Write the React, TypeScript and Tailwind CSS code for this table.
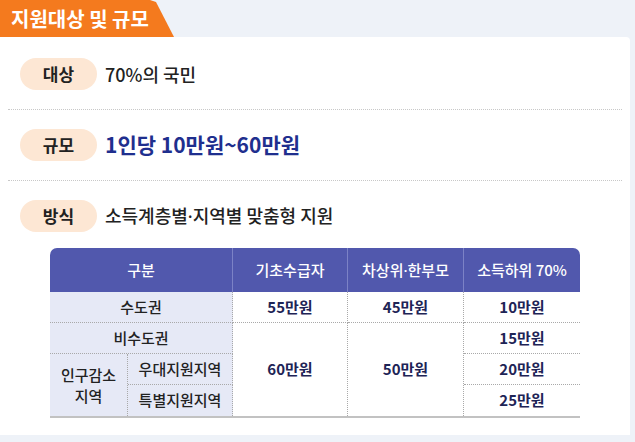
import React from "react";

const font = { fontFamily: '"Noto Sans CJK KR", "Noto Sans", sans-serif' };
const dotFont = { fontFamily: '"Noto Sans", "Liberation Sans", sans-serif' };

function Dot() {
  return <span style={dotFont}>·</span>;
}

function Badge({ children }: { children: React.ReactNode }) {
  return (
    <div className="flex h-[32px] w-[77px] shrink-0 items-center justify-center rounded-full bg-[#fde7d4] text-[17px] font-bold text-[#222]">
      {children}
    </div>
  );
}

const lab = "bg-[#e6e9f6] text-[15px] font-medium text-[#222] text-center";
const val = "bg-white text-[15px] font-bold text-[#1e2456] text-center";
const dotB = "border-b border-dotted border-[#a9a9a9]";
const dotR = "border-r border-dotted border-[#a9a9a9]";

export default function App() {
  return (
    <div className="h-[442px] w-[635px] overflow-hidden bg-[#eef2f8]" style={font}>
      <div className="h-[37px] w-[174px] bg-[#f47a1e] [clip-path:polygon(0_0,150px_0,156px_2px,174px_100%,0_100%)] flex items-center pl-[11px]">
        <span className="text-[20px] font-bold text-white">지원대상 및 규모</span>
      </div>
      <div className="mr-[5px] h-[398px] rounded-tr-[4px] bg-white pt-[2px]">
        <div className="mx-[8px] flex items-center gap-[8px] border-b border-dotted border-[#c8c8c8] pb-[19px] pl-[12px] pt-[19px]">
          <Badge>대상</Badge>
          <span className="text-[18px] font-medium text-[#222]">70%의 국민</span>
        </div>
        <div className="mx-[8px] flex items-center gap-[8px] border-b border-dotted border-[#c8c8c8] pb-[19px] pl-[12px] pt-[19px]">
          <Badge>규모</Badge>
          <span className="text-[21px] font-bold text-[#1f2f8e]">1인당 10만원~60만원</span>
        </div>
        <div className="mx-[8px] flex items-center gap-[8px] pl-[12px] pt-[19px]">
          <Badge>방식</Badge>
          <span className="text-[18px] font-medium text-[#222]">
            소득계층별<Dot />지역별 맞춤형 지원
          </span>
        </div>
        <div className="ml-[50px] mt-[16px] w-[530px] overflow-hidden rounded-t-[7px] border-b-2 border-[#c2c2c2]">
          <table className="w-[530px] table-fixed border-separate border-spacing-0">
            <colgroup>
              <col className="w-[78px]" />
              <col className="w-[105px]" />
              <col className="w-[115px]" />
              <col className="w-[116px]" />
              <col className="w-[116px]" />
            </colgroup>
            <thead>
              <tr className="h-[44px] bg-[#5158ad] text-[15px] font-medium text-white">
                <th colSpan={2} className="border-r border-[#7c82c6] font-medium">구분</th>
                <th className="border-r border-[#7c82c6] font-medium">기초수급자</th>
                <th className="border-r border-[#7c82c6] font-medium">
                  차상위<Dot />한부모
                </th>
                <th className="font-medium">소득하위 70%</th>
              </tr>
            </thead>
            <tbody>
              <tr className="h-[31px]">
                <td colSpan={2} className={`${lab} ${dotB} ${dotR}`}>수도권</td>
                <td className={`${val} ${dotB} ${dotR}`}>55만원</td>
                <td className={`${val} ${dotB} ${dotR}`}>45만원</td>
                <td className={`${val} ${dotB}`}>10만원</td>
              </tr>
              <tr className="h-[31px]">
                <td colSpan={2} className={`${lab} ${dotB} ${dotR}`}>비수도권</td>
                <td rowSpan={3} className={`${val} ${dotR}`}>60만원</td>
                <td rowSpan={3} className={`${val} ${dotR}`}>50만원</td>
                <td className={`${val} ${dotB}`}>15만원</td>
              </tr>
              <tr className="h-[31px]">
                <td rowSpan={2} className={`${lab} ${dotR} leading-[21px]`}>
                  인구감소
                  <br />
                  지역
                </td>
                <td className={`${lab} ${dotB} ${dotR}`}>우대지원지역</td>
                <td className={`${val} ${dotB}`}>20만원</td>
              </tr>
              <tr className="h-[31px]">
                <td className={`${lab} ${dotR}`}>특별지원지역</td>
                <td className={val}>25만원</td>
              </tr>
            </tbody>
          </table>
        </div>
      </div>
    </div>
  );
}
